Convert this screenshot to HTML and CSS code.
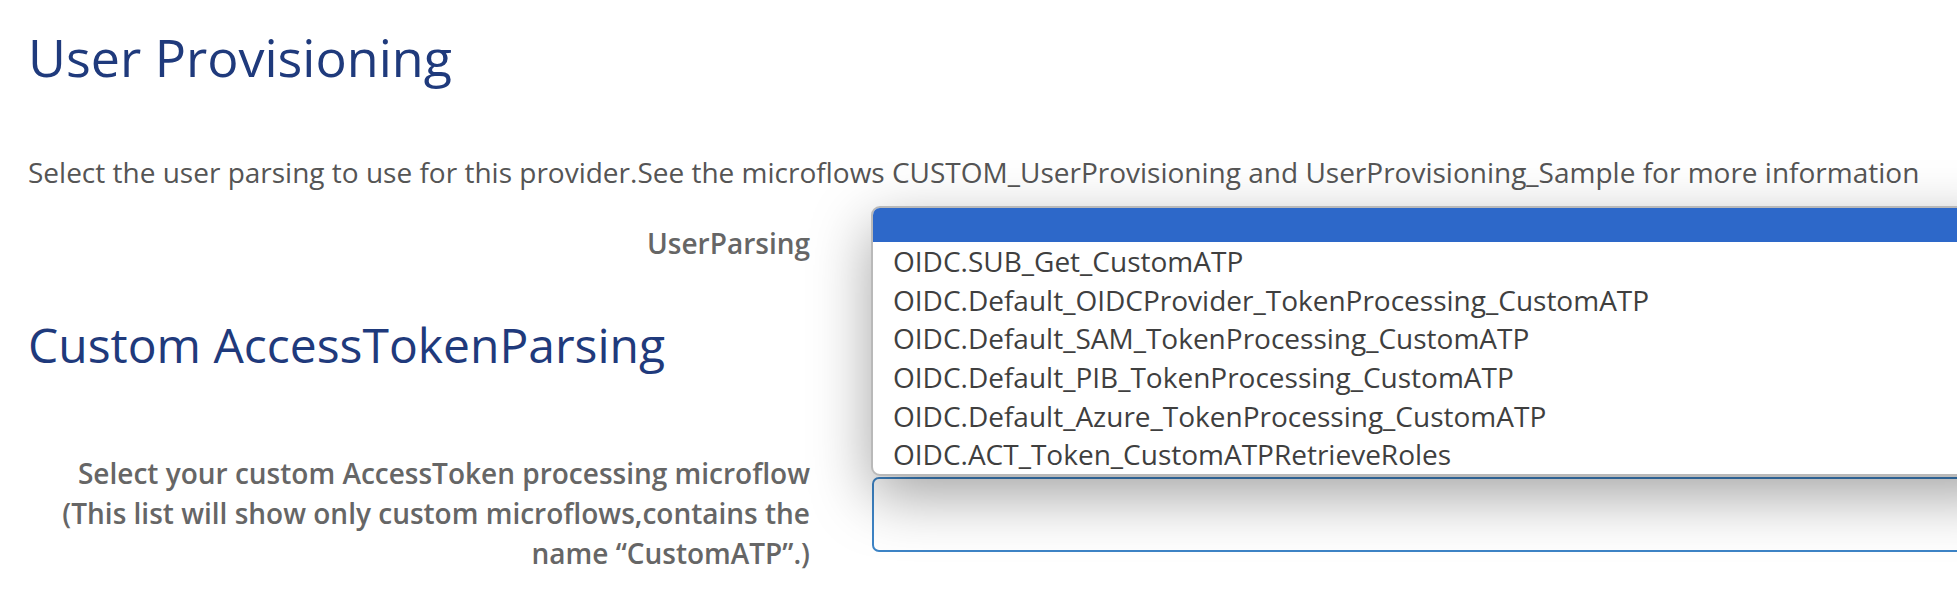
FILE: index.html
```html
<!DOCTYPE html>
<html lang="en">
<head>
<meta charset="utf-8">
<title>User Provisioning</title>
<link rel="stylesheet" href="styles.css">
</head>
<body>
<div class="page">
  <h2 class="title">User Provisioning</h2>
  <p class="intro">Select the user parsing to use for this provider.See the microflows CUSTOM_UserProvisioning and UserProvisioning_Sample for more information</p>

  <div class="form-row row-parsing">
    <label class="form-label">UserParsing</label>
    <div class="control">
      <div class="select-box"></div>
      <ul class="dropdown">
        <li class="option selected"></li>
        <li class="option">OIDC.SUB_Get_CustomATP</li>
        <li class="option">OIDC.Default_OIDCProvider_TokenProcessing_CustomATP</li>
        <li class="option">OIDC.Default_SAM_TokenProcessing_CustomATP</li>
        <li class="option">OIDC.Default_PIB_TokenProcessing_CustomATP</li>
        <li class="option">OIDC.Default_Azure_TokenProcessing_CustomATP</li>
        <li class="option">OIDC.ACT_Token_CustomATPRetrieveRoles</li>
      </ul>
    </div>
  </div>

  <h3 class="subtitle">Custom AccessTokenParsing</h3>

  <div class="form-row row-token">
    <label class="form-label">Select your custom AccessToken processing microflow (This list will show only custom microflows,contains the name “CustomATP”.)</label>
    <div class="control">
      <div class="input-box"></div>
    </div>
  </div>
</div>
</body>
</html>
```

FILE: styles.css
```css
html, body {
  margin: 0;
  padding: 0;
  background: #ffffff;
  overflow: hidden;
}

body {
  font-family: "Open Sans", "Noto Sans", sans-serif;
  width: 1957px;
  height: 603px;
}

.page {
  padding: 26px 0 0 28px;
}

.title {
  margin: 0;
  font-size: 52px;
  line-height: 62px;
  font-weight: 400;
  color: #1f3a7c;
}

.intro {
  margin: 65px 0 0 0;
  font-size: 28px;
  line-height: 39px;
  color: #555555;
  white-space: nowrap;
}

.form-row {
  display: grid;
  grid-template-columns: 782px 1fr;
  column-gap: 62px;
  align-items: center;
}

.form-label {
  text-align: right;
  font-size: 28px;
  line-height: 40px;
  font-weight: 600;
  color: #666666;
}

.row-parsing {
  margin-top: 26px;
  height: 52px;
}

.row-parsing .form-label {
  line-height: 39px;
  margin-top: -1px;
}

.control {
  position: relative;
}

.select-box {
  height: 52px;
  box-sizing: border-box;
  border: 1px solid #c8c8c8;
  border-radius: 6px;
  margin-right: -40px;
}

.dropdown {
  position: absolute;
  top: -12px;
  left: -1px;
  right: -60px;
  margin: 0;
  padding: 0;
  list-style: none;
  background: #ffffff;
  border: 2px solid #b9b9b9;
  border-radius: 9px;
  overflow: hidden;
  box-shadow: 0 20px 60px rgba(0, 0, 0, 0.36);
  z-index: 10;
}

.option {
  padding-left: 20px;
  font-size: 28px;
  line-height: 38.7px;
  height: 38.7px;
  color: #3f3f3f;
  white-space: nowrap;
}

.option.selected {
  height: 34px;
  background: #2d68c9;
}

.subtitle {
  margin: 47px 0 0 0;
  font-size: 48px;
  line-height: 56px;
  font-weight: 400;
  color: #1f3a7c;
}

.row-token {
  margin-top: 80px;
}

.input-box {
  height: 75px;
  margin-top: 2px;
  box-sizing: border-box;
  border: 2px solid #3d84c6;
  border-radius: 7px;
  background: #ffffff;
  margin-right: -40px;
}
```
